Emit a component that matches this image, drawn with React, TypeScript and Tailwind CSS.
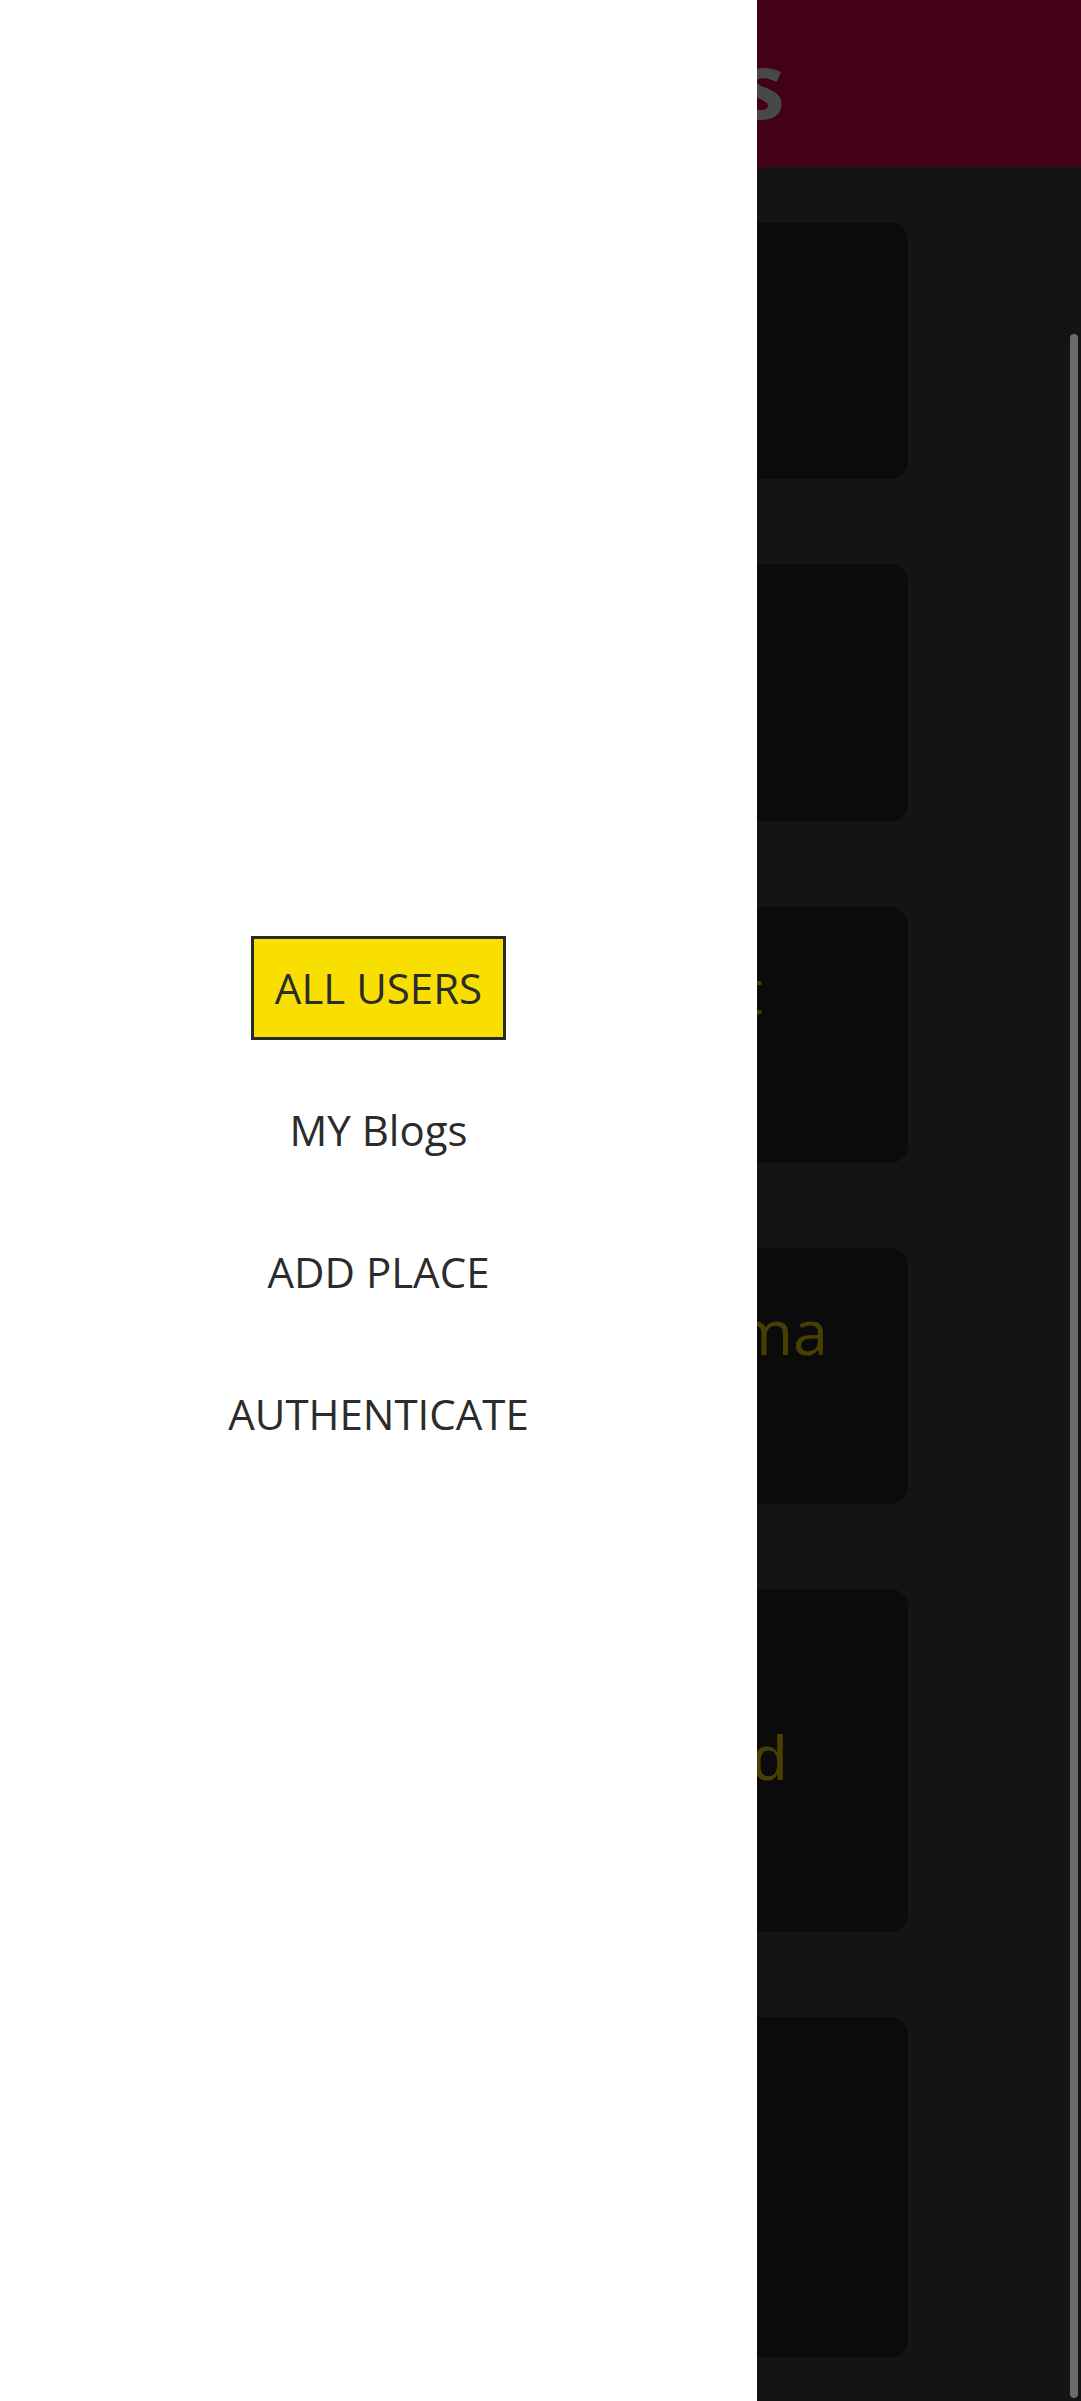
import React from "react";

type Line = { text: string; mr: string; font?: string };
type Card = { h: string; lines: Line[] };

const cards: Card[] = [
  { h: "h-[257px]", lines: [{ text: "Travel", mr: "mr-[200px]" }] },
  { h: "h-[258px]", lines: [{ text: "Food", mr: "mr-[220px]" }] },
  { h: "h-[256px]", lines: [{ text: "Sunset", mr: "mr-[145px]" }] },
  { h: "h-[256px]", lines: [{ text: "Sushma", mr: "mr-[80px]" }] },
  {
    h: "h-[343px]",
    lines: [
      { text: "Mountain", mr: "mr-[190px]" },
      { text: "Trip Planned", mr: "mr-[121px]", font: "font-['Liberation_Sans',sans-serif]" },
    ],
  },
  {
    h: "h-[341px]",
    lines: [
      { text: "Old City", mr: "mr-[200px]" },
      { text: "Walk", mr: "mr-[230px]" },
    ],
  },
];

const navItems = ["ALL USERS", "MY Blogs", "ADD PLACE", "AUTHENTICATE"];

export default function App() {
  return (
    <div className="relative w-[1081px] h-[2401px] overflow-hidden bg-[#141414] font-['Open_Sans',sans-serif]">
      {/* header */}
      <header className="h-[167px] bg-[#420019] flex items-center justify-end pr-[296px]">
        <h1 className="text-[92px] leading-[92px] font-bold text-[#484848]">Blogs</h1>
      </header>

      {/* card list */}
      <main className="flex flex-col gap-[85px] pt-[55px] pl-[173px]">
        {cards.map((c, i) => (
          <div
            key={i}
            className={`${c.h} w-[735px] rounded-[18px] bg-[#0b0b0b] shadow-[0_0_10px_rgba(255,255,255,0.02)] flex flex-col items-end pt-[40px]`}
          >
            {c.lines.map((l, j) => (
              <span
                key={j}
                className={`${l.mr} ${l.font ?? ""} text-[63px] leading-[86px] text-[#4a3f02] whitespace-nowrap`}
              >
                {l.text}
              </span>
            ))}
          </div>
        ))}
      </main>

      {/* scrollbar thumb */}
      <div className="absolute right-[3px] top-[334px] bottom-[3px] w-[8px] rounded-full bg-[#6b6b6b]" />

      {/* side drawer */}
      <aside className="absolute left-0 top-0 h-full w-[757px] bg-white flex flex-col items-center justify-center gap-[38px]">
        {navItems.map((item, i) => (
          <a
            key={item}
            className={`h-[104px] px-[21px] flex items-center text-[42px] leading-[63px] text-[#2b2b2b] border-[3px] ${
              i === 0 ? "bg-[#f8df00] border-[#292929]" : "border-transparent"
            }`}
          >
            {item}
          </a>
        ))}
      </aside>
    </div>
  );
}
